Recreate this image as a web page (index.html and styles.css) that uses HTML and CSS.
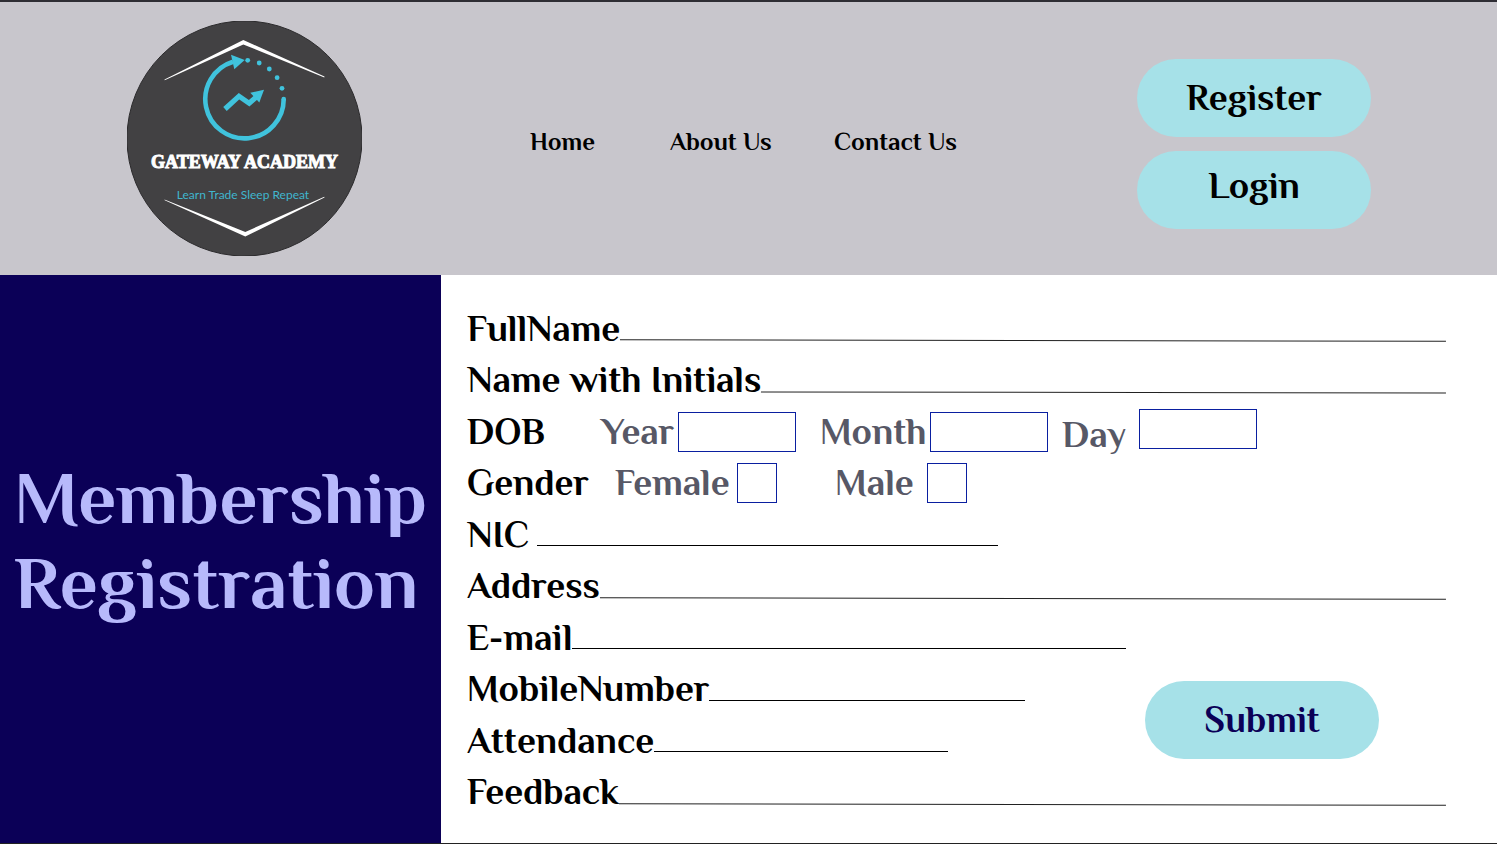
FILE: index.html
```html
<!DOCTYPE html>
<html lang="en">
<head>
<meta charset="utf-8">
<meta name="viewport" content="width=device-width, initial-scale=1">
<title>Gateway Academy – Membership Registration</title>
<link rel="stylesheet" href="styles.css">
</head>
<body>
<header class="header">
  <svg class="logo" viewBox="0 0 235 235" role="img" aria-label="Gateway Academy">
    <circle cx="117.5" cy="117.5" r="117.5" fill="#424143" stroke="#2c2b2d" stroke-width="1"/>
    <path d="M37.5 58.4 116.3 19 197.5 55.6 197.3 56.4 116.3 23.4 37.7 59.2Z" fill="#fff"/>
    <path d="M37.5 178.4 118.3 211 197.3 175.8 197.5 176.6 118.3 215.6 37.7 179.2Z" fill="#fff"/>
    <path d="M156.7 78A39.2 39.2 0 1 1 106 40.7" fill="none" stroke="#40c3dd" stroke-width="4.6"/>
    <circle cx="156.7" cy="78" r="2.3" fill="#40c3dd"/>
    <path d="M104 33.7 117.7 39 107.3 48.2Z" fill="#40c3dd"/>
    <g fill="#40c3dd">
      <circle cx="120.7" cy="39.3" r="2.4"/>
      <circle cx="132.2" cy="42" r="2.4"/>
      <circle cx="142.3" cy="48" r="2.4"/>
      <circle cx="150.1" cy="56.7" r="2.4"/>
      <circle cx="155" cy="67.3" r="2.4"/>
    </g>
    <path d="M98 88 112 75.2 122.2 82.3 130.5 75" fill="none" stroke="#40c3dd" stroke-width="5.2"/>
    <path d="M123.3 71.7 137 68.8 132.3 81.5Z" fill="#40c3dd"/>
    <text class="logo-name" x="117.5" y="147" text-anchor="middle">GATEWAY ACADEMY</text>
    <text class="logo-tag" x="116" y="178" text-anchor="middle">Learn Trade Sleep Repeat</text>
  </svg>
  <nav class="nav">
    <a href="#home">Home</a>
    <a href="#about">About Us</a>
    <a href="#contact">Contact Us</a>
  </nav>
  <div class="actions">
    <button class="pill" type="button">Register</button>
    <button class="pill pill-login" type="button">Login</button>
  </div>
</header>
<main class="main">
  <section class="banner">
    <h1>Membership Registration</h1>
  </section>
  <form class="form">
    <div class="row"><label for="fullname">FullName</label><input class="line sloped" id="fullname" type="text"></div>
    <div class="row"><label for="initials">Name with Initials</label><input class="line sloped" id="initials" type="text"></div>
    <div class="row" role="group" aria-labelledby="dob">
      <span class="group-dob" id="dob">DOB</span>
      <div class="field"><label class="label-year" for="year">Year</label><input class="box" id="year" type="text"></div>
      <div class="field field-month"><label class="label-month" for="month">Month</label><input class="box" id="month" type="text"></div>
      <div class="field field-day"><label class="label-day" for="day">Day</label><input class="box" id="day" type="text"></div>
    </div>
    <div class="row" role="group" aria-labelledby="gender">
      <span class="group-gender" id="gender">Gender</span>
      <div class="field"><label class="label-female" for="female">Female</label><input class="check" id="female" type="checkbox"></div>
      <div class="field field-male"><label class="label-male" for="male">Male</label><input class="check" id="male" type="checkbox"></div>
    </div>
    <div class="row row-nic"><label for="nic">NIC</label><input class="line" id="nic" type="text"></div>
    <div class="row"><label for="address">Address</label><input class="line sloped" id="address" type="text"></div>
    <div class="row row-email"><label for="email">E-mail</label><input class="line" id="email" type="email"></div>
    <div class="row row-mobile"><label for="mobile">MobileNumber</label><input class="line" id="mobile" type="tel"></div>
    <div class="row row-attendance"><label for="attendance">Attendance</label><input class="line" id="attendance" type="text"></div>
    <div class="row"><label for="feedback">Feedback</label><input class="line sloped" id="feedback" type="text"></div>
    <button class="pill submit" type="submit">Submit</button>
  </form>
</main>
</body>
</html>
```
FILE: styles.css
```css
* {
  box-sizing: border-box;
}

body {
  margin: 0;
  min-height: 100vh;
  display: flex;
  flex-direction: column;
  border-top: 2px solid #2e2d33;
  border-bottom: 1px solid #222;
  background: #fff;
  color: #000;
  font-family: Philosopher, "Liberation Serif", serif;
  font-weight: bold;
}

input,
button {
  font: inherit;
  color: inherit;
}

.header {
  display: flex;
  align-items: center;
  padding: 19px 126px 19px 127px;
  background: #c8c6cc;
}

.logo {
  display: block;
  width: 235px;
  height: 235px;
}

.logo-name {
  font-family: "Liberation Serif", serif;
  font-size: 18px;
  fill: #fff;
  stroke: #fff;
  stroke-width: 1px;
}

.logo-tag {
  font-family: Lato, sans-serif;
  font-weight: normal;
  font-size: 12px;
  fill: #40b6ce;
}

.nav {
  display: grid;
  grid-template-columns: 140px 164px auto;
  margin-left: 168px;
  padding-top: 6px;
  font-size: 25px;
}

.nav a {
  color: inherit;
  text-decoration: none;
  white-space: nowrap;
}

.actions {
  display: grid;
  gap: 14px;
  margin-left: auto;
  padding-top: 10px;
}

.pill {
  width: 234px;
  height: 78px;
  padding: 0;
  border: 0;
  border-radius: 39px;
  background: #a6e1e8;
  font-size: 37px;
  line-height: 40px;
}

.pill-login {
  padding-bottom: 8px;
}

.main {
  flex: 1;
  display: grid;
  grid-template-columns: 441px 1fr;
}

.banner {
  display: flex;
  align-items: center;
  padding: 0 14px 38px;
  background: #0b0057;
}

.banner h1 {
  margin: 0;
  color: #b7b9fb;
  font-size: 75px;
  line-height: 85px;
}

.form {
  display: grid;
  grid-template-columns: 1fr auto;
  grid-template-rows: repeat(10, 1fr);
  padding: 28px 51px 25px 26px;
  font-size: 37px;
  line-height: 40px;
}

.row {
  grid-column: 1 / -1;
  display: flex;
  align-items: center;
  white-space: nowrap;
}

.line {
  flex: 1;
  align-self: flex-start;
  min-width: 0;
  height: 37px;
  padding: 0 4px;
  border: 0;
  border-bottom: 1px solid #000;
  background: none;
  font-size: 25px;
}

.sloped {
  height: 38px;
  border-color: #222;
  transform: rotate(0.1deg);
}

.row-nic {
  gap: 8px;
  max-width: 531px;
}

.row-email {
  max-width: 659px;
}

.row-mobile,
.row-attendance {
  grid-column: 1;
  max-width: 558px;
}

.row-attendance {
  max-width: 481px;
}

.group-dob {
  width: 134px;
}

.group-gender {
  width: 148px;
}

.field {
  display: flex;
  align-items: center;
  color: #575866;
}

.field-month {
  margin-left: 24px;
}

.field-day {
  height: 46px;
  margin-left: 14px;
}

.field-day .box {
  align-self: flex-start;
}

.field-day label {
  align-self: flex-end;
}

.field-male {
  margin-left: 58px;
}

.label-year {
  width: 77px;
}

.label-month {
  width: 110px;
}

.label-day {
  width: 77px;
}

.label-female {
  width: 122px;
}

.label-male {
  width: 92px;
}

.box,
.check {
  width: 118px;
  height: 40px;
  margin: 0;
  padding: 0 8px;
  border: 1px solid #0a1fa0;
  border-radius: 0;
  background: #fff;
  font-size: 25px;
}

.check {
  appearance: none;
  width: 40px;
  padding: 0;
}

.check:checked {
  background: #0a1fa0;
}

.submit {
  grid-column: 2;
  grid-row: 8 / span 2;
  align-self: center;
  margin: 10px 67px 0 0;
  color: #0b0057;
}

.row:nth-child(1) { grid-row: 1; }
.row:nth-child(2) { grid-row: 2; }
.row:nth-child(3) { grid-row: 3; }
.row:nth-child(4) { grid-row: 4; }
.row:nth-child(5) { grid-row: 5; }
.row:nth-child(6) { grid-row: 6; }
.row:nth-child(7) { grid-row: 7; }
.row:nth-child(8) { grid-row: 8; }
.row:nth-child(9) { grid-row: 9; }
.row:nth-child(10) { grid-row: 10; }
```
